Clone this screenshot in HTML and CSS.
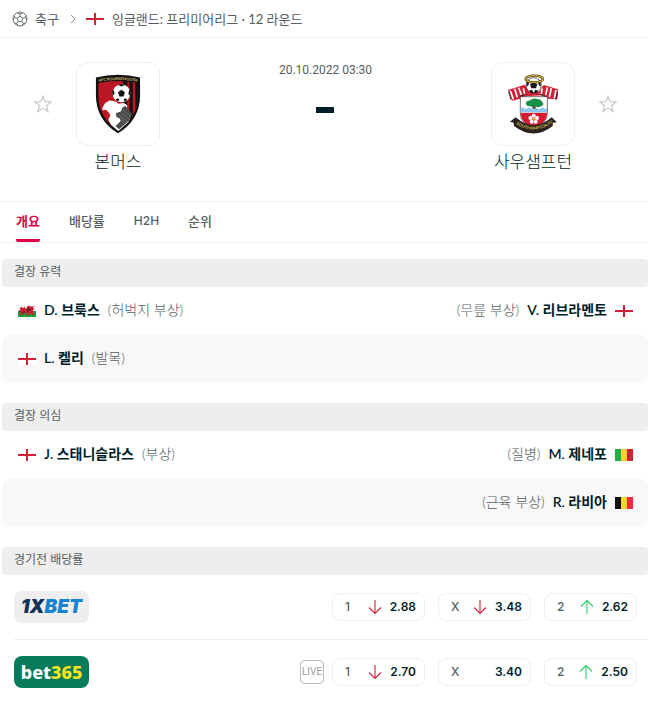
FILE: index.html
```html
<!DOCTYPE html>
<html lang="ko">
<head>
  <meta charset="UTF-8" />
  <meta name="viewport" content="width=device-width, initial-scale=1.0"/>
  <title>본머스 - 사우샘프턴</title>
  <link rel="stylesheet" href="styles.css">
</head>
<body>

<!-- Shared icons -->
<svg class="sprite" aria-hidden="true">
  <symbol id="flag-eng" viewBox="0 0 18 12">
    <rect width="18" height="12" fill="#fff"/>
    <path d="M0 6h18M9 0v12" stroke="#d0203a" stroke-width="2"/>
  </symbol>
  <symbol id="flag-wal" viewBox="0 0 54 36">
    <rect width="54" height="18" fill="#f4f4f4"/>
    <rect y="18" width="54" height="18" fill="#209a35"/>
    <path d="M4 11l7-6 4 5 5-5 4 8 5-11 14 3 6-3-4 7 5 4-6 2 5 8-7-2 7 8-6 2-7-7-4 7-7-1 2-5-10-1-5 7-8-2 6-4-7-4 4-3-6-2 8-2z" fill="#c91f35"/>
    <path d="M25 15l6-8 3 6 5-3-2 8-6-2-3 5zM13 21l6-2 3 4-7 1z" fill="#5d1b24"/>
  </symbol>
  <symbol id="flag-mli" viewBox="0 0 18 12">
    <rect width="6" height="12" fill="#22ac48"/><rect x="6" width="6" height="12" fill="#f8d32a"/><rect x="12" width="6" height="12" fill="#cf2435"/>
  </symbol>
  <symbol id="flag-bel" viewBox="0 0 18 12">
    <rect width="6" height="12" fill="#111"/><rect x="6" width="6" height="12" fill="#f9d52f"/><rect x="12" width="6" height="12" fill="#ed2b3b"/>
  </symbol>
  <symbol id="star" viewBox="0 0 18 18">
    <path d="M9 1.2l2.1 5.5 6 .2-4.7 3.7 1.7 5.9L9 13.1l-5.1 3.4 1.7-5.9L.9 6.9l6-.2z" fill="none" stroke="#c4c8ca" stroke-width="1.2"/>
  </symbol>
  <symbol id="arrow-down" viewBox="0 0 14 16">
    <path d="M7 1v13.5M1 8.5l6 6 6-6" fill="none" stroke="#d0243f" stroke-width="1.1"/>
  </symbol>
  <symbol id="arrow-up" viewBox="0 0 14 16">
    <path d="M7 15V1.5M1 7.5l6-6 6 6" fill="none" stroke="#2dcf6c" stroke-width="1.1"/>
  </symbol>
</svg>

<nav class="breadcrumb">
  <svg class="ball" viewBox="0 0 16 16" aria-hidden="true">
    <g fill="none" stroke="#6b7376" stroke-width="1">
      <circle cx="8" cy="8" r="7"/>
      <path d="M8 5.200l2.800 2-1 3.200H6.200l-1-3.200zM8 5.200V3M10.800 7.200l2.200-.8M9.800 10.400l1.500 2M6.200 10.400l-1.500 2M5.200 7.200L3 6.400M5.200 1.800L8 3l2.800-1.200M14 4.500l-1 1.900 1.800 2.600M13.300 12l-2 .4-1.500 2.200M6.200 14.600l-1.500-2.200-2-.4M1.200 9L3 6.400 2 4.500"/>
    </g>
  </svg>
  <a href="#">축구</a>
  <svg class="chevron" viewBox="0 0 6 10" aria-hidden="true"><path d="M1 1l4 4-4 4" fill="none" stroke="#8b9193"/></svg>
  <svg class="flag"><use href="#flag-eng"/></svg>
  <a href="#">잉글랜드: 프리미어리그 · 12 라운드</a>
</nav>

<header class="match">
  <div class="side">
    <button class="star" aria-label="본머스 즐겨찾기"><svg><use href="#star"/></svg></button>
    <a class="team" href="#">
      <span class="crest-box">
        <svg class="crest" viewBox="225 60 138 174" aria-hidden="true">
          <path d="M230 70q64-15 128 0v52q0 70-64 110q-64-40-64-110z" fill="#15110f"/>
          <path d="M237 86q57-11 114 0v36q0 63-57 101q-57-38-57-101z" fill="#bb1724"/>
          <path d="M309 79h12v124l-12 9zM327 81h10v102l-10 14zM344 84h9v60l-9 20z" fill="#17110f"/>
          <path id="afc" d="M236 83q58-11 117 0" fill="none"/>
          <text font-size="11" fill="#d8c77e" font-weight="700"><textPath href="#afc" startOffset="2">AFC BOURNEMOUTH</textPath></text>
          <path d="M249 157l8-13 12-7 16 2 11 7 15-2 9 6 2 15 11 12-9 22-29 26-21-17-8-15 6-15-12-14-11 1z" fill="#fff"/>
          <path d="M288 174l15-6 4-11 8-4 11 10 8 13-8 19-29 25-10-9 15-15-4-8-9-4z" fill="#4a4a4c"/>
          <path d="M293 175l31 25M301 170l28 23M308 163l23 20M300 188l18 16" stroke="#aaa" stroke-width="1"/>
          <circle cx="304" cy="116" r="26" fill="#fff"/>
          <path d="M304 106l10 7-4 12h-12l-4-12zM294 92l10 4 10-4-10-3zM327 105l-3 12 5 6 2-12zM281 105l3 12-5 6-2-12zM287 135l6-5 5 4-3 6zM321 135l-6-5-5 4 3 6z" fill="#15110f"/>
        </svg>
      </span>
      <span class="team-name">본머스</span>
    </a>
  </div>
  <div class="score">
    <time>20.10.2022 03:30</time>
    <span class="dash"></span>
  </div>
  <div class="side">
    <a class="team" href="#">
      <span class="crest-box">
        <svg class="crest" viewBox="78 57 156 180" aria-hidden="true">
          <path d="M81 105l50-16 13 20 30 1 14-20 43 13-2 30-28-2-16-10-52 3-17 8-23 5z" fill="#d91d35"/>
          <path d="M88 107l9 26M101 101l8 26M113 98l8 22M127 100l4 18M183 100l-2 17M199 97l-5 23M211 99l-6 27M225 105l-5 25" stroke="#fff" stroke-width="5"/>
          <path d="M83 111l7 23M230 111l-5 23M118 123l16-6M177 118l20 8" stroke="#28201f" stroke-width="3"/>
          <circle cx="158" cy="91" r="23" fill="#fff" stroke="#191919" stroke-width="2"/>
          <path d="M158 80l11 8-4 12h-14l-4-12zM137 83l8-6-2 12-6 7zM179 83l-8-6 2 12 6 7zM144 107l9-3 5 10-7 1zM172 107l-9-3-5 10 7 1z" fill="#191919"/>
          <ellipse cx="160" cy="72" rx="26" ry="10" fill="none" stroke="#322a1a" stroke-width="7"/>
          <ellipse cx="160" cy="72" rx="26" ry="10" fill="none" stroke="#d4ae2d" stroke-width="4"/>
          <path d="M118 125h81v50q0 30-41 45q-40-15-40-45z" fill="#fff" stroke="#332b2b" stroke-width="2"/>
          <path d="M119 173h79q0 31-40 46q-39-15-39-46z" fill="#d71b32"/>
          <path d="M119 160q5-5 10 0t10 0 10 0 10 0 10 0 10 0 10 0 9 0v12h-79z" fill="#8bc8eb"/>
          <path d="M154 145h10v16h-10z" fill="#654c29"/>
          <path d="M135 147q0-10 11-10 11-9 24-4 10 0 13 8 8 8-3 12-8 6-17 0-8 5-15 0-11 1-13-6z" fill="#149247" stroke="#184a29"/>
          <g fill="#fff">
            <circle cx="158" cy="182" r="6"/><circle cx="168" cy="189" r="6"/><circle cx="164" cy="200" r="6"/><circle cx="152" cy="200" r="6"/><circle cx="148" cy="189" r="6"/>
          </g>
          <circle cx="158" cy="192" r="4" fill="#dfb83f"/>
          <path d="M104 187q54 47 108 0l15 14-11 3-1 9q-57 45-116 0l-1-10-11-3z" fill="#27221e"/>
          <path id="saints" d="M97 202q61 46 125-3" fill="none"/>
          <text font-size="13" fill="#d4b453" font-weight="700"><textPath href="#saints" startOffset="10">SOUTHAMPTON FC</textPath></text>
        </svg>
      </span>
      <span class="team-name">사우샘프턴</span>
    </a>
    <button class="star" aria-label="사우샘프턴 즐겨찾기"><svg><use href="#star"/></svg></button>
  </div>
</header>

<nav class="tabs">
  <a class="active" href="#">개요</a>
  <a href="#">배당률</a>
  <a class="latin" href="#">H2H</a>
  <a href="#">순위</a>
</nav>

<main>
  <section>
    <h2>결장 유력</h2>
    <div class="row">
      <div class="player"><svg class="flag"><use href="#flag-wal"/></svg><a href="#">D. 브룩스</a><span>(허벅지 부상)</span></div>
      <div class="player away"><svg class="flag"><use href="#flag-eng"/></svg><a href="#">V. 리브라멘토</a><span>(무릎 부상)</span></div>
    </div>
    <div class="row">
      <div class="player"><svg class="flag"><use href="#flag-eng"/></svg><a href="#">L. 켈리</a><span>(발목)</span></div>
    </div>
  </section>

  <section>
    <h2>결장 의심</h2>
    <div class="row">
      <div class="player"><svg class="flag"><use href="#flag-eng"/></svg><a href="#">J. 스태니슬라스</a><span>(부상)</span></div>
      <div class="player away"><svg class="flag"><use href="#flag-mli"/></svg><a href="#">M. 제네포</a><span>(질병)</span></div>
    </div>
    <div class="row">
      <div class="player away"><svg class="flag"><use href="#flag-bel"/></svg><a href="#">R. 라비아</a><span>(근육 부상)</span></div>
    </div>
  </section>

  <section>
    <h2>경기전 배당률</h2>
    <div class="odds-row">
      <a class="bookmaker onexbet" href="#"><span>1X</span>BET</a>
      <button class="odd"><span>1</span><svg><use href="#arrow-down"/></svg><b>2.88</b></button>
      <button class="odd"><span>X</span><svg><use href="#arrow-down"/></svg><b>3.48</b></button>
      <button class="odd"><span>2</span><svg><use href="#arrow-up"/></svg><b>2.62</b></button>
    </div>
    <div class="odds-row">
      <a class="bookmaker bet365" href="#">bet<span>365</span></a>
      <a class="live" href="#">LIVE</a>
      <button class="odd"><span>1</span><svg><use href="#arrow-down"/></svg><b>2.70</b></button>
      <button class="odd"><span>X</span><b>3.40</b></button>
      <button class="odd"><span>2</span><svg><use href="#arrow-up"/></svg><b>2.50</b></button>
    </div>
  </section>
</main>

</body>
</html>
```
FILE: styles.css
```css
* { margin: 0; padding: 0; box-sizing: border-box; }
body {
  font-family: Lato, 'Noto Sans CJK KR', sans-serif;
  font-size: 13px;
  line-height: 20px;
  background: #fff;
  color: #001e28;
}
a { color: inherit; text-decoration: none; }
button { background: none; border: none; font: inherit; cursor: pointer; }
svg { display: block; flex: none; }
.sprite { position: absolute; width: 0; height: 0; }
.flag { width: 18px; height: 12px; }

/* Breadcrumb */
.breadcrumb {
  display: flex;
  align-items: center;
  height: 38px;
  padding: 0 12px;
  border-bottom: 1px solid #eee;
  color: #555e61;
}
.ball { width: 16px; height: 16px; margin-right: 7px; }
.chevron { width: 6px; height: 10px; margin: 0 10px 0 11px; }
.breadcrumb .flag { margin-right: 8px; }

/* Match header */
.match {
  display: flex;
  justify-content: space-between;
  margin-left: 2px;
  padding: 24px 31px 27px 32px;
}
.side { display: flex; gap: 24px; }
.star { width: 18px; height: 84px; }
.star svg { width: 18px; height: 18px; }
.team {
  display: flex;
  flex-direction: column;
  align-items: center;
  width: 84px;
}
.crest-box {
  display: flex;
  align-items: center;
  justify-content: center;
  width: 84px;
  height: 84px;
  border: 1px solid #eee;
  border-radius: 12px;
}
.crest { width: 52px; height: 60px; }
.team-name {
  margin-top: 4px;
  font-size: 17px;
  line-height: 24px;
  font-weight: 300;
  white-space: nowrap;
}
.score {
  display: flex;
  flex-direction: column;
  align-items: center;
}
.score time {
  font-family: Roboto, sans-serif;
  font-size: 12px;
  line-height: 16px;
  color: #555e61;
}
.dash {
  width: 18px;
  height: 6px;
  margin-top: 29px;
  background: #001e28;
}

/* Tabs */
.tabs {
  display: flex;
  gap: 29px;
  height: 42px;
  padding: 0 16px;
  border-top: 1px solid #eee;
  border-bottom: 1px solid #eee;
  line-height: 38px;
  font-weight: 500;
  color: #555e61;
}
.tabs .active {
  color: #dc0046;
  font-weight: 700;
  border-bottom: 3px solid #dc0046;
  border-radius: 2px;
}
.tabs .latin { font-family: Inter, sans-serif; font-size: 12px; }

/* Sections */
section { margin: 0 0 20px 2px; }
main { padding-top: 16px; }
section:last-child { margin-bottom: 0; }
h2 {
  height: 28px;
  padding: 0 12px;
  border-radius: 4px;
  background: #eee;
  color: #555e61;
  font-size: 12px;
  line-height: 26px;
  font-weight: 400;
}
.row {
  display: flex;
  align-items: center;
  height: 48px;
  padding: 0 15px 0 16px;
  border-radius: 8px;
}
.row:nth-child(odd) { background: #f8f8f8; }
.player {
  display: flex;
  align-items: center;
  gap: 8px;
  font-size: 14px;
}
.player a { padding-bottom: 2px; font-weight: 600; }
.player span {
  padding-bottom: 2px;
  font-weight: 300;
  color: #555e61;
}
.away { flex-direction: row-reverse; margin-left: auto; }

/* Odds */
.odds-row {
  display: flex;
  align-items: center;
  gap: 13px;
  margin-left: 12px;
  padding: 16px 11px 16px 0;
}
.odds-row + .odds-row { border-top: 1px solid #eee; padding-bottom: 8px; }
.bookmaker {
  width: 75px;
  height: 32px;
  margin-right: auto;
  border-radius: 8px;
  text-align: center;
  line-height: 32px;
}
.onexbet {
  background: #eee;
  color: #1683d0;
  font-family: Inter, sans-serif;
  font-size: 19px;
  font-style: italic;
  font-weight: 900;
}
.onexbet span { color: #123256; }
.bet365 {
  background: #087b5b;
  color: #fff;
  font-family: 'Noto Sans', sans-serif;
  font-size: 18px;
  font-weight: 800;
}
.bet365 span { color: #f9e51d; }
.live {
  width: 24px;
  height: 24px;
  margin-right: -5px;
  border: 1px solid #b8bcbe;
  border-radius: 4px;
  color: #999fa1;
  font-family: Roboto, sans-serif;
  font-size: 10px;
  line-height: 22px;
  text-align: center;
}
.odd {
  display: flex;
  align-items: center;
  gap: 8px;
  width: 93px;
  height: 28px;
  padding: 0 8px 0 12px;
  border: 1px solid #eee;
  border-radius: 8px;
  color: #001e28;
  font-family: Inter, sans-serif;
  font-size: 12px;
}
.odd span { margin-right: auto; color: #555e61; font-weight: 500; }
.odd svg { width: 14px; height: 16px; }
.odd b { font-weight: 600; }
```
